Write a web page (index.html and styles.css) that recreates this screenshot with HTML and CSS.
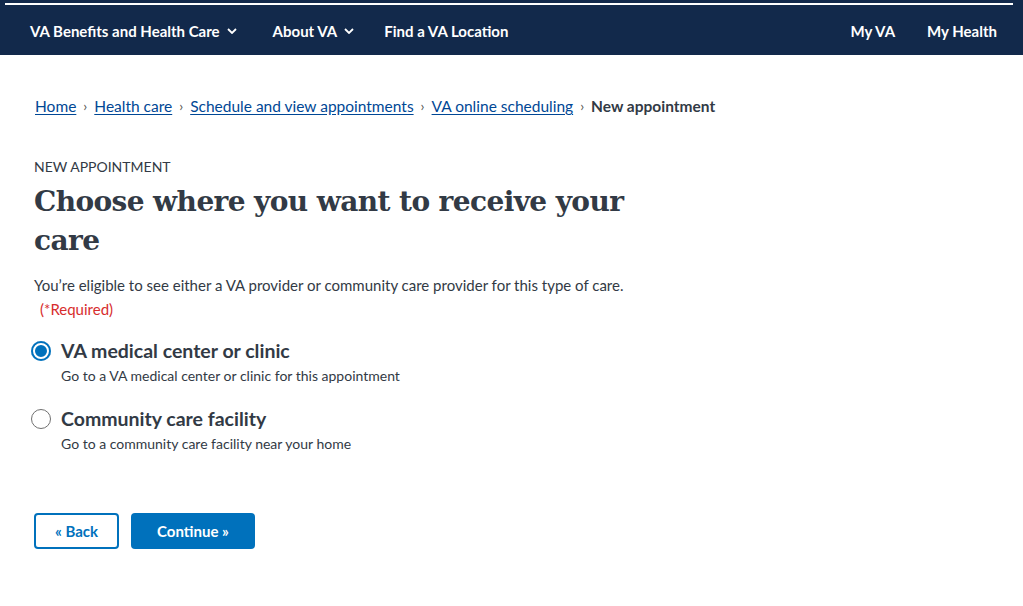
FILE: index.html
```html
<!DOCTYPE html>
<html lang="en">
<head>
<meta charset="utf-8">
<title>Choose where you want to receive your care</title>
<link rel="stylesheet" href="styles.css">
</head>
<body>
<header class="header">
  <div class="topline"></div>
  <nav class="nav">
    <div class="nav-left">
      <a class="nav-item">VA Benefits and Health Care <svg class="chev" viewBox="0 0 10 6" width="10" height="6"><path d="M1 1l4 4 4-4" fill="none" stroke="#fff" stroke-width="1.8"/></svg></a>
      <a class="nav-item">About VA <svg class="chev" viewBox="0 0 10 6" width="10" height="6"><path d="M1 1l4 4 4-4" fill="none" stroke="#fff" stroke-width="1.8"/></svg></a>
      <a class="nav-item">Find a VA Location</a>
    </div>
    <div class="nav-right">
      <a class="nav-item">My VA</a>
      <a class="nav-item">My Health</a>
    </div>
  </nav>
</header>
<main class="main">
  <ol class="crumbs">
    <li><a>Home</a></li>
    <li class="sep">›</li>
    <li><a>Health care</a></li>
    <li class="sep">›</li>
    <li><a>Schedule and view appointments</a></li>
    <li class="sep">›</li>
    <li><a>VA online scheduling</a></li>
    <li class="sep">›</li>
    <li class="current">New appointment</li>
  </ol>
  <div class="eyebrow">NEW APPOINTMENT</div>
  <h1 class="title">Choose where you want to receive your care</h1>
  <p class="lead">You’re eligible to see either a VA provider or community care provider for this type of care.</p>
  <div class="required">(*Required)</div>
  <div class="options">
    <div class="option">
      <span class="radio checked"></span>
      <div class="opt-text">
        <div class="opt-label">VA medical center or clinic</div>
        <div class="opt-desc">Go to a VA medical center or clinic for this appointment</div>
      </div>
    </div>
    <div class="option">
      <span class="radio"></span>
      <div class="opt-text">
        <div class="opt-label">Community care facility</div>
        <div class="opt-desc">Go to a community care facility near your home</div>
      </div>
    </div>
  </div>
  <div class="buttons">
    <button class="btn btn-outline">« Back</button>
    <button class="btn btn-primary">Continue »</button>
  </div>
</main>
</body>
</html>
```
FILE: styles.css
```css
* { box-sizing: border-box; }
body {
  margin: 0;
  background: #fff;
  font-family: "Lato", "Open Sans", sans-serif;
  color: #1b1b1b;
}
.header {
  background: #12294b;
  height: 55px;
  padding-top: 3px;
}
.topline {
  height: 2px;
  background: #fff;
  margin: 0 10px 0 5px;
}
.nav {
  display: flex;
  justify-content: space-between;
  align-items: center;
  height: 51px;
  padding: 0 26px 0 30px;
}
.nav-left, .nav-right {
  display: flex;
  align-items: center;
}
.nav-item {
  color: #fff;
  font-weight: 700;
  font-size: 15px;
  display: flex;
  align-items: center;
  gap: 7px;
}
.nav-left .nav-item { margin-right: 36px; }
.nav-left .nav-item:nth-child(2) { margin-right: 30px; }
.nav-right .nav-item { margin-left: 32px; }
.chev { margin-top: 1px; }
.main {
  padding: 0 34px;
}
.crumbs {
  list-style: none;
  display: flex;
  margin: 0;
  padding: 40px 0 0 1px;
  font-size: 15.5px;
  line-height: 22px;
}
.crumbs a {
  color: #004795;
  text-decoration: underline;
  text-underline-offset: 2px;
}
.crumbs .sep {
  color: #555;
  margin: 0 7px;
  font-size: 14px;
}
.crumbs .current {
  font-weight: 700;
  color: #323a45;
}
.eyebrow {
  margin-top: 41px;
  font-size: 14px;
  color: #323a45;
  line-height: 18px;
}
.title {
  margin: 6px 0 0;
  font-family: "DejaVu Serif", "Liberation Serif", serif;
  font-weight: 700;
  font-size: 28px;
  line-height: 39px;
  color: #323a45;
  width: 620px;
  letter-spacing: -0.6px;
}
.lead {
  margin: 14px 0 0;
  font-size: 15px;
  line-height: 22px;
  color: #323a45;
}
.required {
  color: #d72d2d;
  font-size: 15px;
  line-height: 22px;
  margin: 2px 0 0 6px;
}
.options {
  margin-top: 19px;
  display: flex;
  flex-direction: column;
  gap: 21px;
}
.option {
  display: flex;
  align-items: flex-start;
  gap: 10px;
  margin-left: -3px;
}
.radio {
  width: 20px;
  height: 20px;
  border-radius: 50%;
  border: 1.5px solid #707070;
  background: #fff;
  margin-top: 2px;
  flex: none;
}
.radio.checked {
  border: none;
  background: #0071bc;
  box-shadow: inset 0 0 0 2px #0071bc, inset 0 0 0 4px #fff;
}
.opt-label {
  font-size: 19.5px;
  font-weight: 700;
  line-height: 24px;
  color: #323a45;
}
.opt-desc {
  margin-top: 3px;
  font-size: 14px;
  line-height: 20px;
  color: #323a45;
}
.buttons {
  margin-top: 59px;
  display: flex;
  gap: 12px;
}
.btn {
  font-family: inherit;
  font-size: 15px;
  font-weight: 700;
  height: 36px;
  border-radius: 4px;
  cursor: pointer;
}
.btn-outline {
  background: #fff;
  color: #0071bc;
  border: 2px solid #0071bc;
  width: 85px;
}
.btn-primary {
  background: #0071bc;
  color: #fff;
  border: none;
  width: 124px;
}
```
